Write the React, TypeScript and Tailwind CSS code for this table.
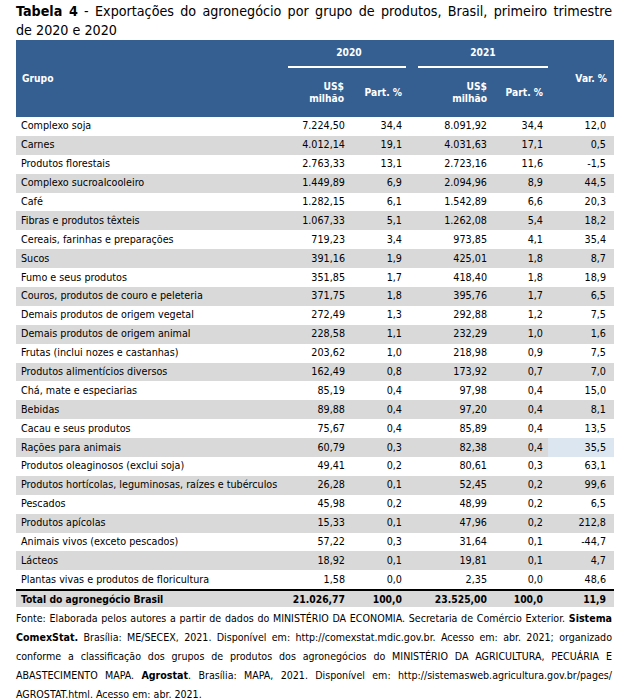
import React from "react";

const rows: [string, string, string, string, string, string][] = [
  ["Complexo soja", "7.224,50", "34,4", "8.091,92", "34,4", "12,0"],
  ["Carnes", "4.012,14", "19,1", "4.031,63", "17,1", "0,5"],
  ["Produtos florestais", "2.763,33", "13,1", "2.723,16", "11,6", "-1,5"],
  ["Complexo sucroalcooleiro", "1.449,89", "6,9", "2.094,96", "8,9", "44,5"],
  ["Café", "1.282,15", "6,1", "1.542,89", "6,6", "20,3"],
  ["Fibras e produtos têxteis", "1.067,33", "5,1", "1.262,08", "5,4", "18,2"],
  ["Cereais, farinhas e preparações", "719,23", "3,4", "973,85", "4,1", "35,4"],
  ["Sucos", "391,16", "1,9", "425,01", "1,8", "8,7"],
  ["Fumo e seus produtos", "351,85", "1,7", "418,40", "1,8", "18,9"],
  ["Couros, produtos de couro e peleteria", "371,75", "1,8", "395,76", "1,7", "6,5"],
  ["Demais produtos de origem vegetal", "272,49", "1,3", "292,88", "1,2", "7,5"],
  ["Demais produtos de origem animal", "228,58", "1,1", "232,29", "1,0", "1,6"],
  ["Frutas (inclui nozes e castanhas)", "203,62", "1,0", "218,98", "0,9", "7,5"],
  ["Produtos alimentícios diversos", "162,49", "0,8", "173,92", "0,7", "7,0"],
  ["Chá, mate e especiarias", "85,19", "0,4", "97,98", "0,4", "15,0"],
  ["Bebidas", "89,88", "0,4", "97,20", "0,4", "8,1"],
  ["Cacau e seus produtos", "75,67", "0,4", "85,89", "0,4", "13,5"],
  ["Rações para animais", "60,79", "0,3", "82,38", "0,4", "35,5"],
  ["Produtos oleaginosos (exclui soja)", "49,41", "0,2", "80,61", "0,3", "63,1"],
  ["Produtos hortícolas, leguminosas, raízes e tubérculos", "26,28", "0,1", "52,45", "0,2", "99,6"],
  ["Pescados", "45,98", "0,2", "48,99", "0,2", "6,5"],
  ["Produtos apícolas", "15,33", "0,1", "47,96", "0,2", "212,8"],
  ["Animais vivos (exceto pescados)", "57,22", "0,3", "31,64", "0,1", "-44,7"],
  ["Lácteos", "18,92", "0,1", "19,81", "0,1", "4,7"],
  ["Plantas vivas e produtos de floricultura", "1,58", "0,0", "2,35", "0,0", "48,6"],
];

const cols = "grid grid-cols-[272px_62px_58px_84px_56px_66px]";
const jline = "whitespace-nowrap text-justify [text-align-last:justify]";

export default function App() {
  return (
    <div
      className="w-[628px] h-[699px] bg-white text-black overflow-hidden"
      style={{ fontFamily: '"DejaVu Sans Condensed", "DejaVu Sans", sans-serif' }}
    >
      <div className="pl-[16px] pr-[16px] pt-[2px] text-[14.2px] leading-[19px]">
        <div className={jline}>
          <span className="font-bold">Tabela 4</span> - Exportações do agronegócio por grupo de produtos, Brasil, primeiro trimestre
        </div>
        <div>de 2020 e 2020</div>
      </div>
      <div className="ml-[16px] w-[598px]">
        {/* header */}
        <div className={`${cols} h-[77px] bg-[#365f91] text-white font-bold text-[10.2px] leading-[12px]`}>
          <div className="row-span-2 flex items-center pl-[6px]">Grupo</div>
          <div className="col-span-2 h-[28px] flex flex-col">
            <div className="flex-1 flex items-center justify-center pl-[2px]">2020</div>
            <div className="h-[2px] bg-white mr-[2px]" />
          </div>
          <div className="col-span-2 h-[28px] flex flex-col">
            <div className="flex-1 flex items-center justify-center pl-[10px]">2021</div>
            <div className="h-[2px] bg-white ml-[10px]" />
          </div>
          <div className="row-span-2 flex items-center justify-end pr-[7px]">Var. %</div>
          <div className="h-[49px] flex items-center justify-end pr-[6px] text-right">
            <span>US$<br />milhão</span>
          </div>
          <div className="h-[49px] flex items-center justify-end pr-[6px]">Part. %</div>
          <div className="h-[49px] flex items-center justify-end pr-[5px] text-right">
            <span>US$<br />milhão</span>
          </div>
          <div className="h-[49px] flex items-center justify-end pr-[5px]">Part. %</div>
        </div>
        {/* body */}
        <div className="text-[10.7px]">
          {rows.map((r, i) => (
            <div
              key={r[0]}
              className={`${cols} h-[18.9px] items-center ${i % 2 === 1 ? "bg-[#d9d9d9]" : "bg-white"}`}
            >
              <div className="pl-[5px] whitespace-nowrap">{r[0]}</div>
              <div className="text-right pr-[5px]">{r[1]}</div>
              <div className="text-right pr-[6px]">{r[2]}</div>
              <div className="text-right pr-[5px]">{r[3]}</div>
              <div className="text-right pr-[5px]">{r[4]}</div>
              <div
                className={`h-full flex items-center justify-end pr-[8px] ${
                  r[0] === "Rações para animais" ? "bg-[#dce6f1]" : ""
                }`}
              >
                {r[5]}
              </div>
            </div>
          ))}
          <div className={`${cols} h-[16px] items-center bg-[#d9d9d9] border-t-2 border-black font-bold text-[10.3px] box-content`}>
            <div className="pl-[5px] whitespace-nowrap">Total do agronegócio Brasil</div>
            <div className="text-right pr-[5px]">21.026,77</div>
            <div className="text-right pr-[6px]">100,0</div>
            <div className="text-right pr-[5px]">23.525,00</div>
            <div className="text-right pr-[5px]">100,0</div>
            <div className="text-right pr-[8px]">11,9</div>
          </div>
        </div>
      </div>
      <div className="pl-[16px] pr-[16px] pt-[2px] text-[10.6px] leading-[19px]">
        <div className={jline}>
          Fonte: Elaborada pelos autores a partir de dados do MINISTÉRIO DA ECONOMIA. Secretaria de Comércio Exterior. <span className="font-bold">Sistema</span>
        </div>
        <div className={jline}>
          <span className="font-bold">ComexStat.</span> Brasília: ME/SECEX, 2021. Disponível em: http://comexstat.mdic.gov.br. Acesso em: abr. 2021; organizado
        </div>
        <div className={jline}>
          conforme a classificação dos grupos de produtos dos agronegócios do MINISTÉRIO DA AGRICULTURA, PECUÁRIA E
        </div>
        <div className={jline}>
          ABASTECIMENTO MAPA. <span className="font-bold">Agrostat</span>. Brasília: MAPA, 2021. Disponível em: http://sistemasweb.agricultura.gov.br/pages/
        </div>
        <div className="whitespace-nowrap">AGROSTAT.html. Acesso em: abr. 2021.</div>
      </div>
    </div>
  );
}
